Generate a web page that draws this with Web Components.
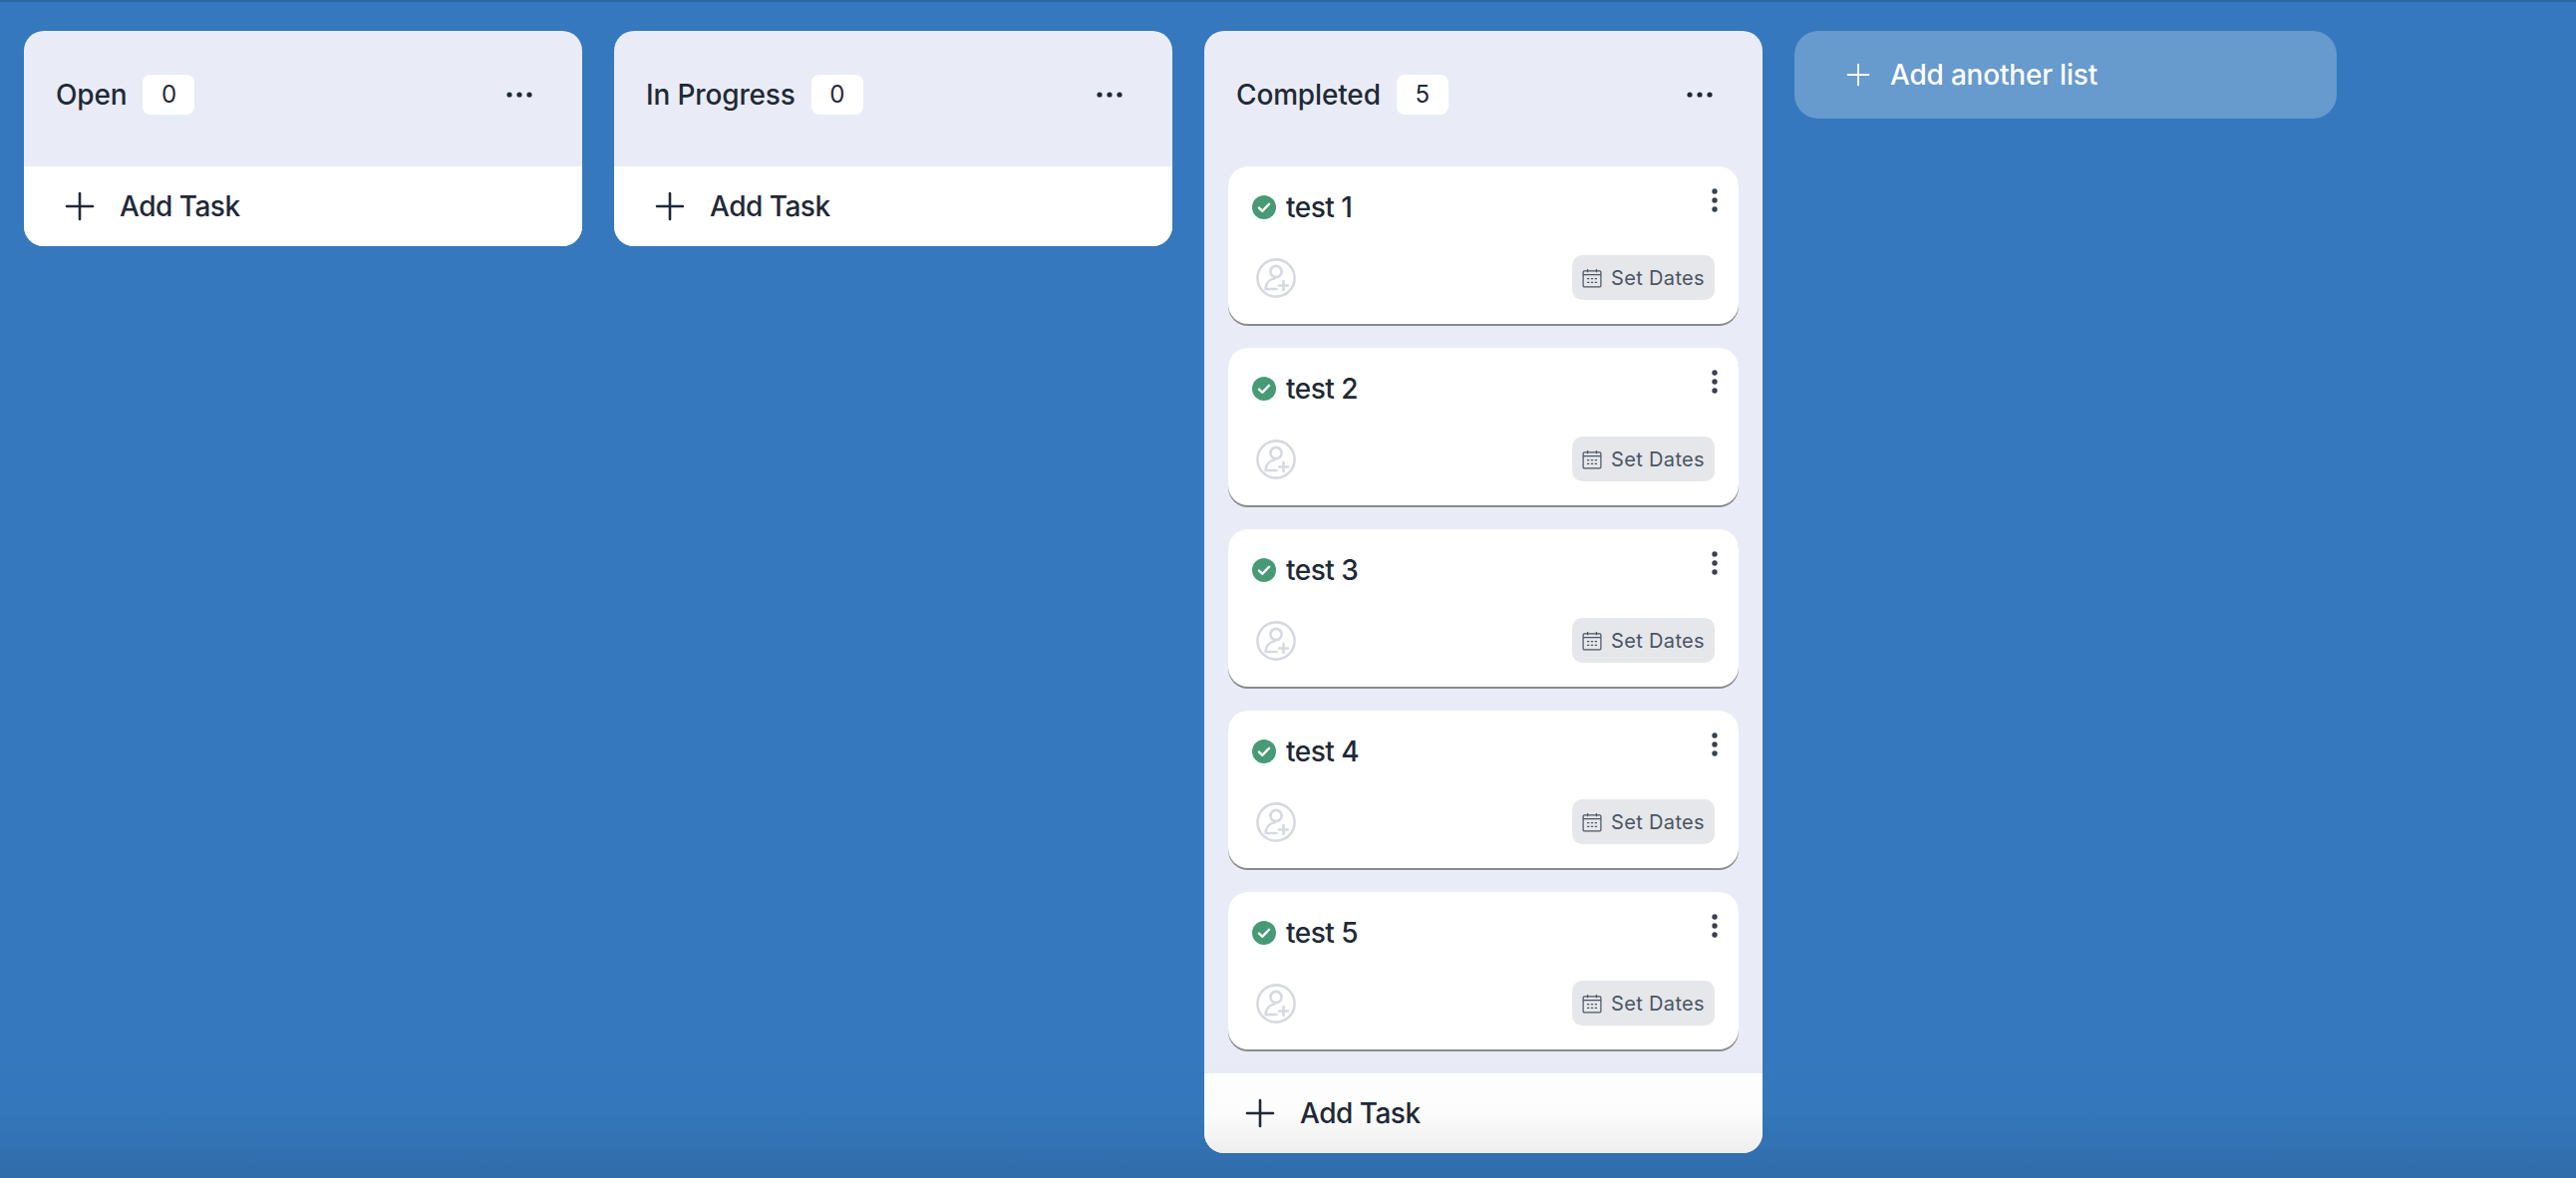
<!DOCTYPE html>
<html>
<head>
<meta charset="utf-8">
<title>Board</title>
<style>
  html, body { margin: 0; height: 100%; }
  body { font-family: Inter, "Liberation Sans", sans-serif; color: #1f2937; background: #3578bd; overflow: hidden; }
</style>
</head>
<body>
<task-board>
  <task-list name="Open" count="0"></task-list>
  <task-list name="In Progress" count="0"></task-list>
  <task-list name="Completed" count="5">
    <task-card>test 1</task-card>
    <task-card>test 2</task-card>
    <task-card>test 3</task-card>
    <task-card>test 4</task-card>
    <task-card>test 5</task-card>
  </task-list>
  <add-list>Add another list</add-list>
</task-board>

<script>
const plusIcon = (size, weight) =>
  `<svg width="${size}" height="${size}" viewBox="0 0 30 30" fill="none" stroke="currentColor" stroke-width="${weight}" stroke-linecap="round"><path d="M15 2v26M2 15h26"/></svg>`;

class TaskBoard extends HTMLElement {
  constructor() {
    super();
    this.attachShadow({mode: "open"});
    this.shadowRoot.innerHTML = `<style>
      :host { display: flex; align-items: flex-start; gap: 32px; box-sizing: border-box; height: 100vh; padding: 31px 24px 0; position: relative; background: #3578bd; }
      #top { position: absolute; left: 0; right: 0; top: 0; height: 2px; background: #2e69a6; }
      #fade { position: absolute; left: 0; right: 0; bottom: 0; height: 130px; pointer-events: none;
        background: linear-gradient(to bottom, rgba(0,0,0,0), rgba(0,0,0,.012) 50%, rgba(0,0,0,.1)); }
    </style><div id="top"></div><slot></slot><div id="fade"></div>`;
  }
}

class TaskList extends HTMLElement {
  constructor() {
    super();
    this.attachShadow({mode: "open"});
    this.shadowRoot.innerHTML = `<style>
      :host { display: block; flex: 0 0 560px; border-radius: 20px; overflow: hidden; background: #e9ecf6; }
      header { display: flex; align-items: center; box-sizing: border-box; height: 136px; padding: 0 32px 8px; }
      h2 { margin: 0; font-size: 28px; line-height: 40px; font-weight: 500; letter-spacing: -.15px; color: #1f2937; }
      .count { margin-left: 16px; min-width: 52px; height: 40px; border-radius: 8px; background: #fff; font-size: 24px; line-height: 40px; text-align: center; }
      .more { margin-left: auto; margin-right: 18px; display: flex; }
      .cards { display: flex; flex-direction: column; gap: 24px; padding: 0 24px 24px; }
      .cards.empty { display: none; }
      footer { display: flex; align-items: center; height: 80px; padding-left: 41px; background: #fff; font-size: 28px; font-weight: 500; letter-spacing: -.5px; color: #1f2937; }
      footer svg { margin-right: 25px; }
    </style>
    <header>
      <h2></h2><span class="count"></span>
      <svg class="more" width="26" height="6" viewBox="0 0 26 6" fill="#1f2937"><circle cx="3" cy="3" r="2.6"/><circle cx="13" cy="3" r="2.6"/><circle cx="23" cy="3" r="2.6"/></svg>
    </header>
    <div class="cards"><slot></slot></div>
    <footer>${plusIcon(30, 2.6)}<span>Add Task</span></footer>`;
  }
  connectedCallback() {
    this.shadowRoot.querySelector("h2").textContent = this.getAttribute("name");
    this.shadowRoot.querySelector(".count").textContent = this.getAttribute("count");
    if (this.getAttribute("count") === "0") {
      this.shadowRoot.querySelector(".cards").classList.add("empty");
    }
  }
}

class TaskCard extends HTMLElement {
  constructor() {
    super();
    this.attachShadow({mode: "open"});
    this.shadowRoot.innerHTML = `<style>
      :host { display: block; box-sizing: border-box; height: 158px; padding: 21px 24px 0; border-radius: 20px; background: #fff; box-shadow: 0 2px 0 0 #8a8a8a; }
      .top { display: flex; align-items: flex-start; height: 68px; }
      .title { display: flex; align-items: center; gap: 10px; height: 40px; font-size: 28px; font-weight: 500; letter-spacing: -.5px; color: #1f2937; }
      .kebab { margin-left: auto; margin-right: -3px; margin-top: 1px; }
      .bottom { display: flex; align-items: center; justify-content: space-between; padding-left: 4px; }
      .dates { display: flex; align-items: center; gap: 9px; box-sizing: border-box; height: 45px; padding: 0 10px; border-radius: 10px; background: #e5e7eb; color: #4b5563; font-size: 20px; letter-spacing: .35px; }
    </style>
    <div class="top">
      <div class="title">
        <svg width="24" height="24" viewBox="0 0 24 24"><circle cx="12" cy="12" r="12" fill="#479a78"/><path d="M7 12.6l3.4 3.2L17 8.8" fill="none" stroke="#fff" stroke-width="2.4" stroke-linecap="round" stroke-linejoin="round"/></svg>
        <span><slot></slot></span>
      </div>
      <svg class="kebab" width="6" height="24" viewBox="0 0 6 24" fill="#374151"><circle cx="3" cy="3" r="2.7"/><circle cx="3" cy="12" r="2.7"/><circle cx="3" cy="21" r="2.7"/></svg>
    </div>
    <div class="bottom">
      <svg width="40" height="40" viewBox="0 0 40 40" fill="none" stroke="#d6d9e0" stroke-width="2.6" stroke-linecap="round"><circle cx="20" cy="20" r="18.6"/><circle cx="20" cy="13.500" r="5.600"/><path d="M9.500 31c.4-5.800 4-10 9-10.500M9.500 31h11M27.500 23v9M23 27.500h9"/></svg>
      <div class="dates">
        <svg width="20" height="20" viewBox="0 0 18 18" fill="none" stroke="#4b5563" stroke-width="1.100"><rect x="1" y="2.500" width="16" height="14.500" rx="1"/><path d="M1 6h16M5 .8v3M13 .8v3"/><path d="M4.500 9.500h9M4.500 13h9" stroke-dasharray="2 1.500"/></svg>
        <span>Set Dates</span>
      </div>
    </div>`;
  }
}

class AddList extends HTMLElement {
  constructor() {
    super();
    this.attachShadow({mode: "open"});
    this.shadowRoot.innerHTML = `<style>
      :host { display: flex; align-items: center; gap: 20px; flex: 0 0 544px; box-sizing: border-box; height: 88px; padding-left: 52px; border-radius: 24px; background: rgba(255,255,255,.25); color: #fff; font-size: 28px; font-weight: 500; letter-spacing: -.2px; }
    </style>${plusIcon(24, 2.2)}<span><slot></slot></span>`;
  }
}

customElements.define("task-board", TaskBoard);
customElements.define("task-list", TaskList);
customElements.define("task-card", TaskCard);
customElements.define("add-list", AddList);
</script>
</body>
</html>
